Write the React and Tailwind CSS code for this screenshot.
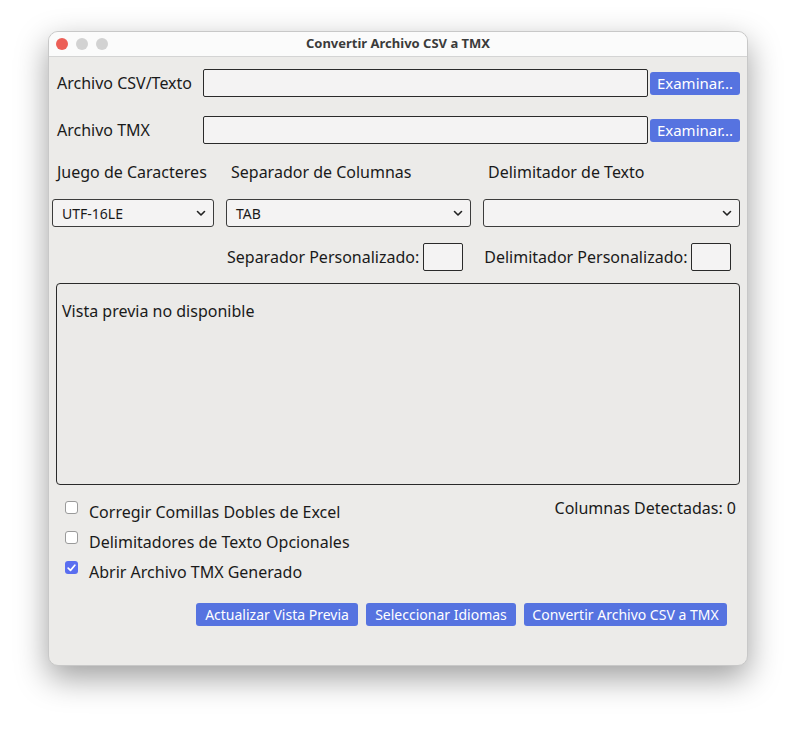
import { useState } from 'react';

// 小さなシェブロン（セレクト用）
function Chevron() {
  return (
    <svg width="10" height="7" viewBox="0 0 10 7" className="pointer-events-none">
      <path d="M1.5 1.5 L5 5 L8.5 1.5" fill="none" stroke="#222" strokeWidth="1.6" strokeLinecap="round" strokeLinejoin="round" />
    </svg>
  );
}

function Select({ value, className }) {
  return (
    <div className={`h-[28px] border border-[#3c3c3c] rounded-[3px] bg-[#f4f3f3] flex items-center pl-[9px] pr-[7px] justify-between ${className}`}>
      <span className="text-[14px] text-[#1a1a1a]">{value}</span>
      <Chevron />
    </div>
  );
}

function BlueButton({ children, className = '' }) {
  return (
    <button className={`h-[23px] rounded-[3px] bg-[#5673e0] text-white leading-none px-[6px] flex items-center justify-center whitespace-nowrap ${className}`}>
      {children}
    </button>
  );
}

function SmallBox() {
  return <span className="w-[40px] h-[28px] border border-[#2a2a2a] rounded-[2px] bg-[#f4f3f3]" />;
}

function Check({ checked, label }) {
  return (
    <label className="flex items-start h-[30px]">
      <span className={`w-[13px] h-[13px] rounded-[3px] flex items-center justify-center shrink-0 ${checked ? 'bg-[#5a6ef0]' : 'bg-white border border-[#9a9a9a]'}`}>
        {checked && (
          <svg width="9" height="8" viewBox="0 0 9 8">
            <path d="M1.2 4.2 L3.5 6.4 L7.8 1.2" fill="none" stroke="white" strokeWidth="1.7" strokeLinecap="round" strokeLinejoin="round" />
          </svg>
        )}
      </span>
      <span className="ml-[11px] mt-[1px] text-[16px] leading-[20px] text-[#1a1a1a]">{label}</span>
    </label>
  );
}

export default function App() {
  const [preview] = useState('Vista previa no disponible');

  return (
    <div className="min-h-screen bg-white pl-[48px] pt-[31px]" style={{ fontFamily: '"Noto Sans", "Open Sans", sans-serif' }}>
      <div className="w-[700px] h-[635px] rounded-[10px] overflow-hidden bg-[#ecebe9] border border-[#c8c8c8] shadow-[0_12px_32px_rgba(0,0,0,0.38)] flex flex-col">

        {/* タイトルバー */}
        <div className="h-[25px] bg-[#fbfbfb] border-b border-[#d4d4d4] flex items-center relative shrink-0">
          <div className="flex gap-[8px] pl-[7px]">
            <span className="w-[12px] h-[12px] rounded-full bg-[#ec5f57]" />
            <span className="w-[12px] h-[12px] rounded-full bg-[#d2d2d2]" />
            <span className="w-[12px] h-[12px] rounded-full bg-[#d2d2d2]" />
          </div>
          <div className="absolute inset-0 flex items-center justify-center text-[13px] font-bold text-[#3b3b3b]">
            Convertir Archivo CSV a TMX
          </div>
        </div>

        <div className="flex flex-col pl-[3px] pr-[7px] text-[#1a1a1a]">
          {/* ファイル行 */}
          <div className="flex items-center mt-[12px] pl-[5px]">
            <span className="w-[146px] text-[16px]">Archivo CSV/Texto</span>
            <input readOnly className="w-[445px] h-[28px] border border-[#2a2a2a] rounded-[2px] bg-[#f4f3f3]" />
            <BlueButton className="ml-[2px] w-[90px] text-[15px]">Examinar...</BlueButton>
          </div>
          <div className="flex items-center mt-[19px] pl-[5px]">
            <span className="w-[146px] text-[16px]">Archivo TMX</span>
            <input readOnly className="w-[445px] h-[28px] border border-[#2a2a2a] rounded-[2px] bg-[#f4f3f3]" />
            <BlueButton className="ml-[2px] w-[90px] text-[15px]">Examinar...</BlueButton>
          </div>

          {/* 見出し */}
          <div className="flex mt-[17px] h-[22px] text-[16px] leading-[22px]">
            <span className="w-[174px] pl-[5px]">Juego de Caracteres</span>
            <span className="w-[257px] pl-[5px]">Separador de Columnas</span>
            <span className="pl-[5px]">Delimitador de Texto</span>
          </div>

          <div className="flex mt-[16px]">
            <Select value="UTF-16LE" className="w-[162px]" />
            <Select value="TAB" className="w-[245px] ml-[12px]" />
            <Select value="" className="w-[257px] ml-[12px]" />
          </div>

          {/* カスタム区切り */}
          <div className="flex items-center mt-[16px] h-[28px] text-[16px]">
            <span className="ml-[175px] mr-[4px]">Separador Personalizado:</span>
            <SmallBox />
            <span className="ml-[21px] mr-[4px]">Delimitador Personalizado:</span>
            <SmallBox />
          </div>

          {/* プレビュー */}
          <div className="ml-[4px] mt-[12px] h-[202px] border border-[#2a2a2a] rounded-[4px] bg-[#ebeae8] px-[5px] pt-[16px]">
            <p className="text-[16px] leading-[22px]">{preview}</p>
          </div>

          {/* オプション */}
          <div className="flex mt-[16px] pl-[13px]">
            <div className="flex flex-col">
              <Check label="Corregir Comillas Dobles de Excel" />
              <Check label="Delimitadores de Texto Opcionales" />
              <Check checked label="Abrir Archivo TMX Generado" />
            </div>
            <span className="ml-auto mr-[4px] text-[16px] leading-[20px] -mt-[3px]">Columnas Detectadas: 0</span>
          </div>

          {/* ボタン */}
          <div className="flex justify-end gap-[8px] mt-[12px] pr-[13px] text-[14px]">
            <BlueButton className="w-[162px]">Actualizar Vista Previa</BlueButton>
            <BlueButton className="w-[150px]">Seleccionar Idiomas</BlueButton>
            <BlueButton className="w-[203px]">Convertir Archivo CSV a TMX</BlueButton>
          </div>
        </div>
      </div>
    </div>
  );
}
